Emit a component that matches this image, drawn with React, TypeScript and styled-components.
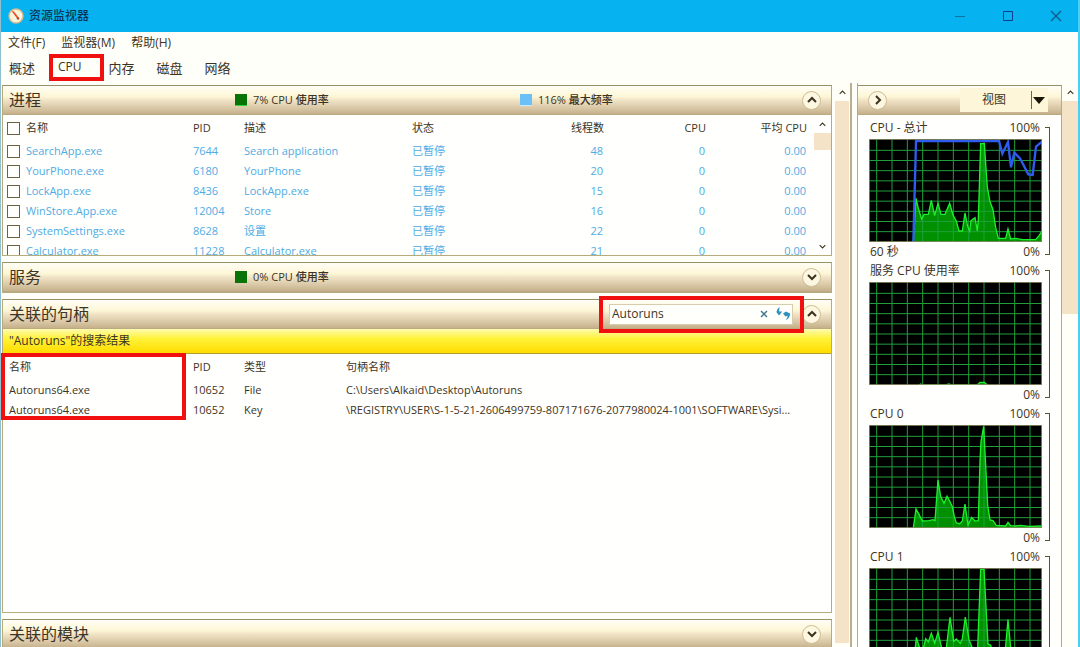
import React from "react";
import styled, { createGlobalStyle, css } from "styled-components";

const sans = `"Open Sans", "Noto Sans CJK SC", sans-serif`;
const ink = "#3d3425";
const line = "#b5ab7c";
const edge = "#979067";
const red = "#f01010";

const GlobalStyle = createGlobalStyle`
  *, *::before, *::after { box-sizing: border-box; }
  body {
    margin: 0;
    background: #fffffa;
    color: ${ink};
    font-family: ${sans};
    font-size: 12px;
    line-height: 16px;
  }
  button, input { font: inherit; color: inherit; margin: 0; }
  button { background: none; border: 0; padding: 0; }
`;

const Window = styled.div`
  display: flex;
  flex-direction: column;
  height: 100vh;
  overflow: hidden;
  border-left: 1px solid #8fbfd0;
  border-right: 2px solid #4dd0f0;
`;

const TitleBar = styled.header`
  flex: none;
  display: flex;
  align-items: center;
  height: 32px;
  margin: 0 -2px 0 -1px;
  padding: 0 8px;
  background: #06b2f0;
  color: #0b3558;
`;

const Title = styled.h1`
  flex: 1;
  margin: 0 0 0 5px;
  font-size: 12px;
  font-weight: 500;
`;

const WindowButtons = styled.div`
  display: flex;
  gap: 16px;
`;

const WindowButton = styled.button`
  display: flex;
  align-items: center;
  justify-content: center;
  width: 32px;
  height: 32px;
`;

const MenuBar = styled.nav`
  flex: none;
  display: flex;
  gap: 16px;
  height: 20px;
  padding: 2px 7px 0;
`;

const TabBar = styled.div`
  flex: none;
  display: flex;
  align-items: center;
  gap: 22px;
  height: 31px;
  padding: 0 8px;
`;

const Tab = styled.button<{ $marked?: boolean }>`
  position: relative;
  font-size: 13px;
  line-height: 20px;
  ${(p) =>
    p.$marked &&
    css`
      font-size: 12px;
      margin-left: 1px;
      margin-right: 5px;
      padding-bottom: 2px;
    `}
`;

const Mark = styled.span<{ $inset: string }>`
  position: absolute;
  inset: ${(p) => p.$inset};
  border: 4px solid ${red};
  pointer-events: none;
`;

const Body = styled.div`
  flex: 1;
  min-height: 0;
  display: flex;
`;

const Main = styled.main`
  flex: 1;
  min-width: 0;
  display: flex;
  flex-direction: column;
  gap: 6px;
  padding: 2px 0 0 1px;
  overflow: hidden;
`;

const Section = styled.section`
  flex: none;
  border: 1px solid ${line};
  border-top-color: ${edge};
  background: #fffffd;
`;

const bar = css`
  height: 29px;
  border-bottom: 1px solid #bcaa85;
  background: linear-gradient(#fffef6, #fdf6d6 38%, #efe2c4 52%, #dccbaa 75%, #c5b08a);
`;

const SectionHeader = styled.div`
  ${bar}
  display: grid;
  grid-template-columns: 232px 285px 1fr auto auto;
  align-items: center;
  padding-right: 10px;
`;

const SectionTitle = styled.h2`
  margin: 0 0 0 6px;
  font-size: 16px;
  line-height: 24px;
  font-weight: 400;
  white-space: nowrap;
`;

const Stat = styled.div`
  display: flex;
  align-items: center;
  gap: 6px;
  font-size: 11px;
  font-weight: 500;
`;

const Swatch = styled.span<{ $color: string; $edge: string }>`
  width: 12px;
  height: 12px;
  background: ${(p) => p.$color};
  border-bottom: 1px solid ${(p) => p.$edge};
`;

const RoundButton = styled.button`
  grid-column: 5;
  display: flex;
  align-items: center;
  justify-content: center;
  width: 19px;
  height: 19px;
  border: 1px solid #cdbd93;
  border-radius: 50%;
  background: #fdf7e2;
`;

const SearchBox = styled.div`
  position: relative;
  grid-column: 4;
  display: flex;
  align-items: center;
  width: 184px;
  height: 21px;
  margin-right: 9px;
  padding: 0 2px;
  gap: 8px;
  border: 1px solid #d8ccae;
  background: #fffffb;
`;

const SearchInput = styled.input`
  flex: 1;
  min-width: 0;
  padding: 0;
  border: 0;
  outline: 0;
  background: transparent;
`;

const IconButton = styled.button`
  display: flex;
  align-items: center;
`;

const SearchResult = styled.p`
  height: 25px;
  margin: 0;
  padding: 4px 6px;
  border-bottom: 1px solid #b0a030;
  background: linear-gradient(#fffbb0, #fff238 40%, #ffdc00);
`;

const ProcessBody = styled.div`
  display: flex;
  height: 140px;
  overflow: hidden;
`;

const HandleBody = styled.div`
  position: relative;
  height: 258px;
`;

const DataTable = styled.table`
  flex: 1;
  width: 100%;
  min-width: 0;
  table-layout: fixed;
  border-collapse: collapse;
  font-size: 11px;

  th, td {
    height: 20px;
    padding: 0;
    font-weight: 400;
    text-align: left;
    white-space: nowrap;
    overflow: hidden;
    text-overflow: ellipsis;
  }
  th { height: 26px; }
`;

const ProcessRow = styled.tr`
  color: #4fabe4;
`;

const Col = styled.col<{ $w?: number }>`
  width: ${(p) => (p.$w ? `${p.$w}px` : "auto")};
`;

const Num = styled.td`
  && { text-align: right; }
  td& { padding-right: 1px; }
`;

const NameLabel = styled.label`
  display: flex;
  align-items: center;
  gap: 6px;
  padding-left: 4px;
`;

const NameText = styled.span`
  padding-left: 6px;
`;

const Check = styled.input`
  appearance: none;
  flex: none;
  width: 13px;
  height: 13px;
  border: 1px solid #6b6244;
  background: #fffffd;
`;

const ScrollTrack = styled.div<{ $w: number }>`
  flex: none;
  display: flex;
  flex-direction: column;
  align-items: center;
  width: ${(p) => p.$w}px;
  background: #fffff8;
`;

const ScrollArrow = styled.button`
  display: flex;
  align-items: center;
  justify-content: center;
  width: 100%;
  height: 18px;
`;

const Thumb = styled.div<{ $h?: number }>`
  width: 100%;
  height: ${(p) => (p.$h ? `${p.$h}px` : "auto")};
  flex: ${(p) => (p.$h ? "none" : "1")};
  background: #f5e3c8;
`;

const TrackEnd = styled.div`
  flex: 1;
`;

const TableScroll = styled(ScrollTrack)`
  margin-left: 7px;
  background: transparent;
`;

const MainScroll = styled(ScrollTrack)`
  margin: 0 1px 0 3px;
  padding-bottom: 4px;
`;

const Divider = styled.div`
  flex: none;
  width: 8px;
  border-left: 2px solid #b9ad92;
  border-right: 1px solid ${line};
`;

const ChartPanel = styled.aside`
  flex: none;
  width: 204px;
  margin-top: 2px;
  border: 1px solid ${line};
  border-left: 0;
  border-top-color: ${edge};
  border-bottom: 0;
  background: #fffffd;
  overflow: hidden;
`;

const ChartToolbar = styled.div`
  ${bar}
  display: flex;
  align-items: center;
  justify-content: space-between;
  padding: 0 13px 0 10px;
`;

const ViewButton = styled.button`
  display: flex;
  align-items: center;
  width: 88px;
  height: 24px;
  background: #fdf6d9;
`;

const ViewText = styled.span`
  flex: 1;
  padding-right: 3px;
  text-align: center;
`;

const ViewArrow = styled.span`
  display: flex;
  align-items: center;
  width: 17px;
  height: 18px;
  padding-left: 1px;
  border-left: 1px solid #70653f;
`;

const Chart = styled.figure`
  display: grid;
  grid-template-columns: 173px 8px;
  height: 143px;
  margin: 0;
  padding: 4px 0 0 11px;
`;

const ChartBody = styled.div`
  display: flex;
  flex-direction: column;
`;

const ChartHead = styled.figcaption`
  display: flex;
  justify-content: space-between;
  height: 20px;
  padding: 1px 2px 0 1px;
`;

const ChartFoot = styled.div`
  display: flex;
  justify-content: space-between;
  height: 16px;
  margin-top: 2px;
  padding: 0 2px 0 1px;
`;

const Plot = styled.svg`
  display: block;
  width: 173px;
  height: 103px;
  background: #000;
`;

const Bracket = styled.div`
  height: 128px;
  margin: 8px 0 0 3px;
  border: 1px solid #5a5032;
  border-left: 0;
`;

function Chevron({ dir, size = 10, weight = 2 }: { dir: "up" | "down" | "right"; size?: number; weight?: number }) {
  const d = { up: "M1 7 5 3 9 7", down: "M1 3 5 7 9 3", right: "M3 1 7 5 3 9" }[dir];
  return (
    <svg width={size} height={size} viewBox="0 0 10 10" fill="none" stroke="#3a321c" strokeWidth={weight}>
      <path d={d} />
    </svg>
  );
}

function AppIcon() {
  return (
    <svg width="16" height="16" viewBox="0 0 16 16">
      <circle cx="8" cy="8" r="7" fill="#fdf4dc" stroke="#d9b98c" strokeWidth="1.4" />
      <path d="M3.5 3 9.5 11 11 10 6 3.6z" fill="#e2502c" />
      <circle cx="10" cy="10.5" r="1.2" fill="#a9502f" />
    </svg>
  );
}

function Collapse({ open, name }: { open: boolean; name: string }) {
  return (
    <RoundButton aria-label={name} aria-expanded={open}>
      <Chevron dir={open ? "up" : "down"} />
    </RoundButton>
  );
}

const verticals = Array.from({ length: 11 }, (_, i) => 23 + i * 46);
const horizontals = Array.from({ length: 9 }, (_, i) => 34 + i * 30.5);

type ChartData = { label: string; span?: string; load: string; freq?: string };

const charts: ChartData[] = [
  {
    label: "CPU - 总计",
    span: "60 秒",
    load: "133,309 141,178 148,208 158,240 165,226 178,226 187,184 197,230 207,193 216,226 228,226 242,193 252,228 262,246 270,276 280,276 288,222 296,262 302,276 306,245 318,236 325,276 328,240 335,14 346,14 355,145 363,188 372,212 380,265 388,298 410,298 417,270 425,300 440,298 460,302 500,302 510,290 519,276",
    freq: "133,309 141,6 390,6 400,44 417,9 426,85 436,41 453,58 478,106 491,108 501,23 519,8",
  },
  {
    label: "服务 CPU 使用率",
    load: "150,309 155,306 160,309 230,309 240,306 248,309 325,309 333,301 346,301 355,309",
  },
  {
    label: "CPU 0",
    load: "133,309 141,252 150,268 160,288 180,287 192,284 198,287 207,165 215,215 225,235 234,214 242,228 250,245 256,275 262,294 272,296 280,288 288,237 297,300 308,277 318,288 328,287 333,110 336,50 344,4 352,160 356,240 363,285 372,287 382,301 410,303 417,292 425,302 440,303 455,301 480,304 519,303",
  },
  {
    label: "CPU 1",
    load: "133,309 138,250 142,208 152,240 162,245 170,212 178,222 187,196 197,226 207,193 218,240 232,240 243,148 254,220 262,213 274,226 280,212 289,147 300,215 310,240 326,240 335,4 345,4 357,228 365,232 375,270 405,290 417,155 426,250 440,300 519,304",
  },
];

function UsageChart({ label, span, load, freq }: ChartData) {
  return (
    <Chart>
      <ChartBody>
        <ChartHead>
          <span>{label}</span>
          <span>100%</span>
        </ChartHead>
        <Plot viewBox="0 0 519 309" role="img" aria-label={label}>
          <polygon points={`${load} 519,309`} fill="#009000" />
          <g stroke="#1f9f3c" strokeWidth="3">
            {verticals.map((x) => (
              <line key={x} x1={x} x2={x} y1="0" y2="309" />
            ))}
            {horizontals.map((y) => (
              <line key={y} x1="0" x2="519" y1={y} y2={y} />
            ))}
          </g>
          <polyline points={load} fill="none" stroke="#1cf02c" strokeWidth="4" />
          {freq && <polyline points={freq} fill="none" stroke="#2f5cf0" strokeWidth="7" />}
          <rect x="1" y="1" width="517" height="307" fill="none" stroke="#8d8a62" strokeWidth="3" />
        </Plot>
        <ChartFoot>
          <span>{span}</span>
          <span>0%</span>
        </ChartFoot>
      </ChartBody>
      <Bracket />
    </Chart>
  );
}

const processes = [
  ["SearchApp.exe", "7644", "Search application", "48"],
  ["YourPhone.exe", "6180", "YourPhone", "20"],
  ["LockApp.exe", "8436", "LockApp.exe", "15"],
  ["WinStore.App.exe", "12004", "Store", "16"],
  ["SystemSettings.exe", "8628", "设置", "22"],
  ["Calculator.exe", "11228", "Calculator.exe", "21"],
];

const handles = [
  ["Autoruns64.exe", "10652", "File", "C:\\Users\\Alkaid\\Desktop\\Autoruns"],
  [
    "Autoruns64.exe",
    "10652",
    "Key",
    "\\REGISTRY\\USER\\S-1-5-21-2606499759-807171676-2077980024-1001\\SOFTWARE\\Sysi...",
  ],
];

export default function App() {
  return (
    <>
      <GlobalStyle />
      <Window>
        <TitleBar>
          <AppIcon />
          <Title>资源监视器</Title>
          <WindowButtons>
            <WindowButton aria-label="最小化">
              <svg width="12" height="12" viewBox="0 0 12 12" stroke="#14709c">
                <path d="M1 6.5H11" />
              </svg>
            </WindowButton>
            <WindowButton aria-label="最大化">
              <svg width="12" height="12" viewBox="0 0 12 12" fill="none" stroke="#0c3f90">
                <path d="M1.500 1.500H10.500V10.500H1.500Z" />
              </svg>
            </WindowButton>
            <WindowButton aria-label="关闭">
              <svg width="12" height="12" viewBox="0 0 12 12" stroke="#0f5580" strokeWidth="1.200">
                <path d="M1 1 11 11M11 1 1 11" />
              </svg>
            </WindowButton>
          </WindowButtons>
        </TitleBar>
        <MenuBar>
          <button>文件(F)</button>
          <button>监视器(M)</button>
          <button>帮助(H)</button>
        </MenuBar>
        <TabBar role="tablist">
          <Tab role="tab">概述</Tab>
          <Tab role="tab" aria-selected $marked>
            CPU
            <Mark $inset="-3px -22px -2px -9px" />
          </Tab>
          <Tab role="tab">内存</Tab>
          <Tab role="tab">磁盘</Tab>
          <Tab role="tab">网络</Tab>
        </TabBar>
        <Body>
          <Main>
            <Section>
              <SectionHeader>
                <SectionTitle>进程</SectionTitle>
                <Stat>
                  <Swatch $color="#087408" $edge="#30d030" />
                  7% CPU 使用率
                </Stat>
                <Stat>
                  <Swatch $color="#6cc0f8" $edge="#c8e8ff" />
                  116% 最大频率
                </Stat>
                <Collapse open name="进程" />
              </SectionHeader>
              <ProcessBody>
                <DataTable>
                  <colgroup>
                    <Col $w={190} />
                    <Col $w={51} />
                    <Col $w={168} />
                    <Col $w={92} />
                    <Col $w={100} />
                    <Col $w={102} />
                    <Col />
                  </colgroup>
                  <thead>
                    <tr>
                      <th>
                        <NameLabel>
                          <Check type="checkbox" />
                          名称
                        </NameLabel>
                      </th>
                      <th>PID</th>
                      <th>描述</th>
                      <th>状态</th>
                      <Num as="th">线程数</Num>
                      <Num as="th">CPU</Num>
                      <Num as="th">平均 CPU</Num>
                    </tr>
                  </thead>
                  <tbody>
                    {processes.map(([name, pid, desc, threads]) => (
                      <ProcessRow key={pid}>
                        <td>
                          <NameLabel>
                            <Check type="checkbox" />
                            {name}
                          </NameLabel>
                        </td>
                        <td>{pid}</td>
                        <td>{desc}</td>
                        <td>已暂停</td>
                        <Num>{threads}</Num>
                        <Num>0</Num>
                        <Num>0.00</Num>
                      </ProcessRow>
                    ))}
                  </tbody>
                </DataTable>
                <TableScroll $w={17}>
                  <ScrollArrow aria-label="向上滚动">
                    <Chevron dir="up" size={7} weight={1.5} />
                  </ScrollArrow>
                  <Thumb $h={17} />
                  <TrackEnd />
                  <ScrollArrow aria-label="向下滚动">
                    <Chevron dir="down" size={7} weight={1.5} />
                  </ScrollArrow>
                </TableScroll>
              </ProcessBody>
            </Section>

            <Section>
              <SectionHeader>
                <SectionTitle>服务</SectionTitle>
                <Stat>
                  <Swatch $color="#087408" $edge="#087408" />
                  0% CPU 使用率
                </Stat>
                <Collapse open={false} name="服务" />
              </SectionHeader>
            </Section>

            <Section>
              <SectionHeader>
                <SectionTitle>关联的句柄</SectionTitle>
                <SearchBox>
                  <SearchInput aria-label="搜索句柄" defaultValue="Autoruns" />
                  <IconButton aria-label="清除">
                    <svg width="8" height="8" viewBox="0 0 8 8" stroke="#3f7390" strokeWidth="1.400">
                      <path d="M1 1 7 7M7 1 1 7" />
                    </svg>
                  </IconButton>
                  <IconButton aria-label="刷新">
                    <svg width="14" height="14" viewBox="0 0 14 14" fill="#2a93bd">
                      <path d="M4 0C1.600 1 .8 2.800 1 4.500H0L3 8.500 6.200 4.500H3.300C3 2.800 3.200 1.400 4 0Z" />
                      <path d="M7 6.500 10 4.500 14 6.500C14.200 9.500 12.500 12 9.500 13C11 11.500 11.800 10 11.500 8.800L9.500 9.500Z" />
                    </svg>
                  </IconButton>
                  <Mark $inset="-9px -12px -9px -11px" />
                </SearchBox>
                <Collapse open name="关联的句柄" />
              </SectionHeader>
              <SearchResult>"Autoruns"的搜索结果</SearchResult>
              <HandleBody>
                <DataTable>
                  <colgroup>
                    <Col $w={190} />
                    <Col $w={51} />
                    <Col $w={102} />
                    <Col />
                  </colgroup>
                  <thead>
                    <tr>
                      <th>
                        <NameText>名称</NameText>
                      </th>
                      <th>PID</th>
                      <th>类型</th>
                      <th>句柄名称</th>
                    </tr>
                  </thead>
                  <tbody>
                    {handles.map(([name, pid, type, path]) => (
                      <tr key={type}>
                        <td>
                          <NameText>{name}</NameText>
                        </td>
                        <td>{pid}</td>
                        <td>{type}</td>
                        <td>{path}</td>
                      </tr>
                    ))}
                  </tbody>
                </DataTable>
                <Mark $inset="-1px 645px 192px -2px" />
              </HandleBody>
            </Section>

            <Section>
              <SectionHeader>
                <SectionTitle>关联的模块</SectionTitle>
                <Collapse open={false} name="关联的模块" />
              </SectionHeader>
            </Section>
          </Main>

          <MainScroll $w={14}>
            <ScrollArrow aria-label="向上滚动">
              <Chevron dir="up" size={7} weight={1.5} />
            </ScrollArrow>
            <Thumb />
          </MainScroll>
          <Divider />

          <ChartPanel>
            <ChartToolbar>
              <RoundButton aria-label="隐藏图表">
                <Chevron dir="right" />
              </RoundButton>
              <ViewButton>
                <ViewText>视图</ViewText>
                <ViewArrow>
                  <svg width="12" height="7" viewBox="0 0 12 7">
                    <path d="M0 0H12L6 7Z" fill="#1a1408" />
                  </svg>
                </ViewArrow>
              </ViewButton>
            </ChartToolbar>
            {charts.map((c) => (
              <UsageChart key={c.label} {...c} />
            ))}
          </ChartPanel>
          <ScrollTrack $w={16}>
            <ScrollArrow aria-label="向上滚动">
              <Chevron dir="up" size={7} weight={1.5} />
            </ScrollArrow>
            <Thumb $h={213} />
          </ScrollTrack>
        </Body>
      </Window>
    </>
  );
}
